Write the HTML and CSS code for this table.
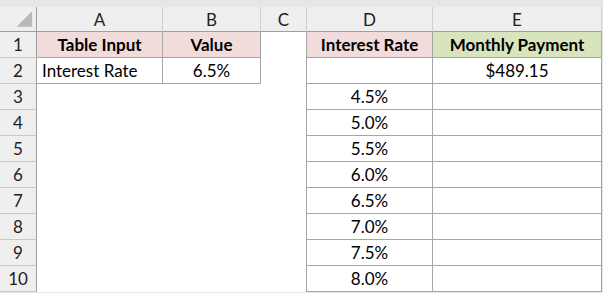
FILE: index.html
```html
<!DOCTYPE html>
<html>
<head>
<meta charset="utf-8">
<link rel="stylesheet" href="styles.css">
</head>
<body>
<div class="strip"></div>
<div class="sheet">
  <div class="corner"><svg width="37" height="25" viewBox="0 0 37 25"><polygon points="33,4 33,20 17,20" fill="#b8b8b8"/></svg></div>
  <div class="ch">A</div><div class="ch">B</div><div class="ch">C</div><div class="ch">D</div><div class="ch">E</div>

  <div class="rh">1</div>
  <div class="c b pink bold ctr">Table Input</div>
  <div class="c b pink bold ctr">Value</div>
  <div class="c br"></div>
  <div class="c b pink bold ctr">Interest Rate</div>
  <div class="c b green bold ctr">Monthly Payment</div>

  <div class="rh">2</div>
  <div class="c b left">Interest Rate</div>
  <div class="c b ctr">6.5%</div>
  <div class="c br"></div>
  <div class="c b"></div>
  <div class="c b ctr">$489.15</div>

  <div class="rh">3</div><div class="c"></div><div class="c"></div><div class="c br"></div><div class="c b ctr">4.5%</div><div class="c b"></div>
  <div class="rh">4</div><div class="c"></div><div class="c"></div><div class="c br"></div><div class="c b ctr">5.0%</div><div class="c b"></div>
  <div class="rh">5</div><div class="c"></div><div class="c"></div><div class="c br"></div><div class="c b ctr">5.5%</div><div class="c b"></div>
  <div class="rh">6</div><div class="c"></div><div class="c"></div><div class="c br"></div><div class="c b ctr">6.0%</div><div class="c b"></div>
  <div class="rh">7</div><div class="c"></div><div class="c"></div><div class="c br"></div><div class="c b ctr">6.5%</div><div class="c b"></div>
  <div class="rh">8</div><div class="c"></div><div class="c"></div><div class="c br"></div><div class="c b ctr">7.0%</div><div class="c b"></div>
  <div class="rh">9</div><div class="c"></div><div class="c"></div><div class="c br"></div><div class="c b ctr">7.5%</div><div class="c b"></div>
  <div class="rh">10</div><div class="c"></div><div class="c"></div><div class="c br"></div><div class="c b ctr">8.0%</div><div class="c b"></div>
</div>
</body>
</html>
```

FILE: styles.css
```css
html, body {
  margin: 0;
  padding: 0;
  background: #e6e6e6;
  width: 603px;
  height: 293px;
  overflow: hidden;
}
.strip {
  height: 7px;
  background: #e6e6e6;
}
.sheet {
  display: grid;
  grid-template-columns: 37px 126px 98px 46px 126px 169px;
  grid-template-rows: 25px repeat(10, 26px);
  width: 602px;
  font-family: Lato, "Open Sans", sans-serif;
  font-size: 17px;
  color: #000;
  background: #fff;
}
.sheet > div {
  box-sizing: border-box;
  display: flex;
  align-items: center;
}
.corner {
  background: #efefef;
  border-right: 1px solid #9e9e9e;
  border-bottom: 1px solid #9e9e9e;
}
.corner svg { display: block; }
.ch {
  background: #efefef;
  border-right: 1px solid #d0d0d0;
  border-bottom: 1px solid #9e9e9e;
  justify-content: center;
  color: #222;
}
.rh {
  background: #efefef;
  border-right: 1px solid #9e9e9e;
  border-bottom: 1px solid #c8c8c8;
  justify-content: center;
  color: #222;
}
.c { background: #fff; }
.b {
  border-right: 1px solid #a6a6a6;
  border-bottom: 1px solid #a6a6a6;
}
.br { border-right: 1px solid #a6a6a6; }
.pink { background: #f2dcdb; }
.green { background: #d8e4bc; }
.bold { font-weight: bold; }
.ctr { justify-content: center; }
.left { padding-left: 5px; }
```
